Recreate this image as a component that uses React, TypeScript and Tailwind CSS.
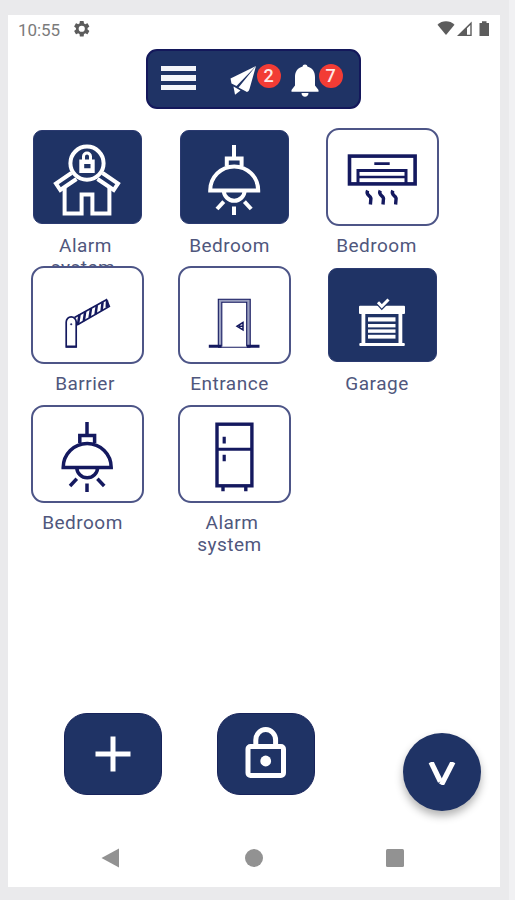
// src/App.tsx
import React from 'react';

const NAVY = '#14195f';

interface IconProps {
  color: string;
}

const TileSvg: React.FC<{ children: React.ReactNode }> = ({ children }) => (
  <svg width="113" height="97" viewBox="0 0 113 97" fill="none" className="shrink-0">
    {children}
  </svg>
);

const HouseIcon: React.FC<IconProps> = ({ color }) => (
  <TileSvg>
    <g stroke={color} strokeWidth="4">
      <circle cx="56" cy="35.2" r="16.6" />
      <path d="M40.5 45 L25 55.5 L29.3 62 L45.5 51" />
      <path d="M71.5 45 L87 55.5 L82.7 62 L66.5 51" />
      <path d="M33.6 59.5 V85.6 H50.6 V66.4 H61.4 V85.6 H78.4 V59.5" />
      <path d="M52.5 33 V28.5 a3.5 3.5 0 0 1 7 0 V33" strokeWidth="3" />
    </g>
    <path fillRule="evenodd" fill={color} d="M48.3 31.5 H63.7 V45 H48.3 Z M53.2 36 V40.3 H59.5 V36 Z" />
  </TileSvg>
);

const LampIcon: React.FC<IconProps & { thin?: boolean }> = ({ color, thin }) => (
  <TileSvg>
    <g stroke={color} strokeWidth={thin ? 3.5 : 4}>
      <path d="M56 17 V30" />
      <path d="M48.8 38 V30.5 H63.6 V38" />
      <path d="M32.2 62.4 a24 24 0 0 1 48 0 Z" />
      <path d="M45.8 62.4 a10.4 10.4 0 0 0 20.8 0" />
      <path d="M56 78.5 V87" />
      <path d="M45.8 73.7 L39 81" />
      <path d="M66.4 73.7 L73.2 81" />
    </g>
  </TileSvg>
);

const AirConditionerIcon: React.FC<IconProps> = ({ color }) => (
  <TileSvg>
    <g stroke={color} strokeWidth="3.4">
      <rect x="23.5" y="28.1" width="65.6" height="27.8" strokeWidth="3.6" />
      <path d="M48.3 35.7 H63.7" strokeWidth="2.8" />
      <path d="M32 56 V42.6 H80 V56" strokeWidth="3" />
      <path d="M32 49 H80" strokeWidth="2.6" />
      {[42.8, 55.4, 68].map((x) => (
        <path key={x} d={`M${x - 1.2} 62.5 c-2.6 5.5 4.6 5 3.2 9.2 l-0.4 4.8`} />
      ))}
    </g>
  </TileSvg>
);

const BarrierIcon: React.FC<IconProps> = ({ color }) => (
  <TileSvg>
    <g stroke={color} strokeWidth="1.7">
      <path d="M35.2 80 V55 a5 5.2 0 0 1 10 0 V80 Z" />
      <path d="M35 79.5 H45.5" strokeWidth="2.2" />
      <circle cx="40.2" cy="57.3" r="0.8" fill={color} strokeWidth="0.4" />
      <path d="M43.5 50.5 L75.5 32.8 L78.3 39.4 L46 58" />
      <path d="M48.5 47.8 L47 57.3 M54.2 44.6 L52.8 54 M60 41.4 L58.6 50.6 M65.8 38.2 L64.6 47.2 M71.6 35 L70.6 43.8 M76 33.5 L75.8 40.5" strokeWidth="2.5" />
    </g>
  </TileSvg>
);

const DoorIcon: React.FC<IconProps> = ({ color }) => (
  <TileSvg>
    <path d="M40 79.5 V32 H72.5 V79.5 H68.7 V35.3 H43.8 V79.5 Z" fill="#9ba0c0" />
    <g stroke={color} strokeWidth="1.1">
      <path d="M40.3 79.5 V32.3 H72.2 V79.5" />
      <path d="M43.8 79.5 V35.3 H68.7 V79.5" />
      <path d="M40 80.2 H72.5" />
      <path d="M30.8 79.2 H43.5 M69 79.2 H81.5" strokeWidth="3" />
      <path d="M65 55.5 L59 59.2 L65 63 Z M61 59.2 H65" strokeWidth="1.5" />
    </g>
  </TileSvg>
);

const GarageIcon: React.FC<IconProps> = ({ color }) => (
  <TileSvg>
    <g fill={color}>
      <rect x="33" y="38.7" width="46" height="8.3" rx="1" />
      <rect x="35.5" y="46" width="3.8" height="31" />
      <rect x="72.5" y="46" width="3.8" height="31" />
      <rect x="33.3" y="76" width="45.5" height="3" rx="1" />
      <rect x="42" y="50.3" width="27.5" height="4.2" />
      <rect x="42" y="57" width="27.5" height="3.4" />
      <rect x="42" y="62.4" width="27.5" height="3.4" />
      <rect x="42" y="67.8" width="27.5" height="3.8" />
    </g>
    <path d="M52 35.2 L55.8 39.3 L62.5 32.5" stroke="#1f3365" strokeWidth="5.5" />
    <path d="M52 35.2 L55.8 39.3 L62.5 32.5" stroke={color} strokeWidth="3" />
  </TileSvg>
);

const FridgeIcon: React.FC<IconProps> = ({ color }) => (
  <TileSvg>
    <g stroke={color} strokeWidth="3.4">
      <rect x="39" y="19.2" width="34.9" height="61.6" />
      <path d="M39 44.2 H74" strokeWidth="3" />
      <path d="M46.2 31.8 V38.5 M46.2 49.8 V56.3" strokeWidth="3.2" />
      <path d="M45 82 V86.3 M67.8 82 V86.3" />
    </g>
  </TileSvg>
);

interface Device {
  label: string;
  active: boolean;
  icon: React.ReactNode;
  labelClass: string;
}

const devices: Device[] = [
  { label: 'Alarm system', active: true, icon: <HouseIcon color="#fff" />, labelClass: 'pr-[9px]' },
  { label: 'Bedroom', active: true, icon: <LampIcon color="#fff" />, labelClass: 'pr-[10px]' },
  { label: 'Bedroom', active: false, icon: <AirConditionerIcon color={NAVY} />, labelClass: 'pr-[12px]' },
  { label: 'Barrier', active: false, icon: <BarrierIcon color={NAVY} />, labelClass: 'pr-[5px]' },
  { label: 'Entrance', active: false, icon: <DoorIcon color={NAVY} />, labelClass: 'pr-[10px]' },
  { label: 'Garage', active: true, icon: <GarageIcon color="#fff" />, labelClass: 'pr-[11px]' },
  { label: 'Bedroom', active: false, icon: <LampIcon color={NAVY} thin />, labelClass: 'pr-[10px]' },
  { label: 'Alarm system', active: false, icon: <FridgeIcon color={NAVY} />, labelClass: 'pr-[10px]' },
];

const DeviceTile: React.FC<{ device: Device }> = ({ device }) => (
  <div className="h-[138.5px] w-[113px]">
    <button className="relative z-10 flex h-[98px] w-[113px] items-center justify-center bg-transparent">
      <span
        className={
          device.active
            ? 'flex h-[94px] w-[109px] items-center justify-center overflow-hidden rounded-[9px] border border-[#2b3a70] bg-[#1f3365]'
            : 'flex h-[98px] w-[113px] items-center justify-center overflow-hidden rounded-[13px] border-2 border-[#4d5587] bg-white'
        }
      >
        {device.icon}
      </span>
    </button>
    <p className={`mt-[9px] text-center text-[19px] leading-[22.5px] tracking-[0.5px] text-[#50577d] ${device.labelClass}`}>
      {device.label.split(' ').map((word, i, words) => (
        <span key={word} className={i < words.length - 1 ? 'block pl-[5px]' : 'block'}>{word}</span>
      ))}
    </p>
  </div>
);

const Badge: React.FC<{ count: number }> = ({ count }) => (
  <span className="flex h-[24px] w-[24px] items-center justify-center rounded-full bg-[#f23c35] text-[18px] font-medium leading-none text-[#ffe9e6]">
    {count}
  </span>
);

const StatusBar: React.FC = () => (
  <div className="flex h-[34px] items-start justify-between pl-[10px] pr-[9px] pt-[5px]">
    <div className="flex items-center">
      <span className="w-[56px] text-[17px] leading-[20px] tracking-[-0.1px] text-[#7b7b7b]">10:55</span>
      <svg width="15.5" height="15.5" viewBox="2 2 20 20" fill="#5c5c5c" className="-mt-[2px]">
        <path
          fillRule="evenodd"
          d="M19.43 12.98c.04-.32.07-.64.07-.98s-.03-.66-.07-.98l2.11-1.65c.19-.15.24-.42.12-.64l-2-3.46c-.12-.22-.39-.3-.61-.22l-2.49 1c-.52-.4-1.08-.73-1.69-.98l-.38-2.65A.49.49 0 0 0 14 2h-4c-.25 0-.46.18-.49.42l-.38 2.65c-.61.25-1.17.59-1.69.98l-2.49-1c-.23-.09-.49 0-.61.22l-2 3.46c-.13.22-.07.49.12.64l2.11 1.65c-.04.32-.07.65-.07.98s.03.66.07.98l-2.11 1.65c-.19.15-.24.42-.12.64l2 3.46c.12.22.39.3.61.22l2.49-1c.52.4 1.08.73 1.69.98l.38 2.65c.03.24.24.42.49.42h4c.25 0 .46-.18.49-.42l.38-2.65c.61-.25 1.17-.59 1.69-.98l2.49 1c.23.09.49 0 .61-.22l2-3.46c.12-.22.07-.49-.12-.64zM12 16a4 4 0 1 1 0-8 4 4 0 0 1 0 8z"
        />
      </svg>
    </div>
    <svg width="54" height="17" viewBox="0 0 54 17" fill="#5c5c5c">
      <path d="M0.5 4.8 C5 0.2 13 0.2 17.5 4.8 L9 15 Z" />
      <path fillRule="evenodd" d="M34.7 1.5 V16 H20 Z M33.3 5 L30 8.3 V14.7 H33.3 Z" />
      <path d="M42.5 3 H45 V1.3 H49.5 V3 H52 V16 H42.5 Z" />
    </svg>
  </div>
);

const TopMenu: React.FC = () => (
  <header className="ml-[138px] flex h-[60px] w-[215px] items-start rounded-[11px] border-2 border-[#14185b] bg-[#1f3365] pl-[13px] pt-[13px]">
    <button className="mt-[2px] flex w-[35px] flex-col gap-[4px]">
      <span className="h-[5.3px] w-full bg-[#f4f5fa]" />
      <span className="h-[5.3px] w-full bg-[#f4f5fa]" />
      <span className="h-[5.3px] w-full bg-[#f4f5fa]" />
    </button>
    <svg width="28" height="32" viewBox="0 0 28 32" fill="#fff" className="ml-[33px] mt-[1px]">
      <path d="M27 1 L1.5 13.5 L2.5 18.5 L7.5 21 Z" />
      <path d="M27 1 L9.5 22.5 L18 27 Q20 26.5 20.5 24 Z" />
      <path d="M4.5 21.5 L6 29.8 L11.5 25.5 Z" />
    </svg>
    <div className="-ml-[0.5px]">
      <Badge count={2} />
    </div>
    <svg width="28" height="33" viewBox="0 0 28 33" fill="#fff" className="ml-[10px]">
      <path d="M14 0.5 C15.5 0.5 16.3 1.4 16.4 2.6 C21.5 4 24 8 24 13 V21.5 L27.5 26 V27.8 H0.5 V26 L4 21.5 V13 C4 8 6.5 4 11.6 2.6 C11.7 1.4 12.5 0.5 14 0.5 Z" />
      <path d="M10.5 28.9 H17.5 C17.5 34 10.5 34 10.5 28.9 Z" />
    </svg>
    <div>
      <Badge count={7} />
    </div>
  </header>
);

const BottomActions: React.FC = () => (
  <div className="flex h-[107px] items-start pl-[55.5px]">
    <button className="flex h-[82px] w-[98px] items-center justify-center rounded-[23px] border border-[#17235a] bg-[#1f3365]">
      <svg width="36" height="36" viewBox="0 0 36 36" stroke="#fff" strokeWidth="5">
        <path d="M18 0.5 V35.5 M0.5 18 H35.5" />
      </svg>
    </button>
    <button className="ml-[55px] flex h-[82px] w-[98px] items-center justify-center rounded-[23px] border border-[#17235a] bg-[#1f3365] pb-[3px]">
      <svg width="41" height="53" viewBox="0 0 41 53" fill="none" stroke="#fff" strokeWidth="5">
        <rect x="3" y="20.5" width="35.5" height="29" rx="2.5" />
        <path d="M10.8 20 V14 a9.9 10.4 0 0 1 19.8 0 V20" />
        <circle cx="20.7" cy="35" r="5.4" fill="#fff" stroke="none" />
      </svg>
    </button>
    <button className="ml-[88px] mt-[19.5px] flex h-[78px] w-[78px] shrink-0 items-center justify-center rounded-full bg-[#1f3365] pt-[3px] shadow-[0_5px_9px_rgba(0,0,0,0.3)]">
      <svg width="28" height="23" viewBox="0 0 28 23" fill="none" stroke="#fff" strokeWidth="5.2">
        <path d="M3 0 L12.4 19.5" />
        <path d="M25 0 L13.4 22.8" />
      </svg>
    </button>
  </div>
);

const NavBar: React.FC = () => (
  <nav className="flex h-[67px] items-center pl-[93px] pt-[8px]">
    <svg width="18" height="20" viewBox="0 0 18 20" fill="#929292">
      <path d="M18 0.5 V19.5 L0.5 10 Z" />
    </svg>
    <span className="ml-[125.5px] h-[18px] w-[18px] rounded-full bg-[#929292]" />
    <span className="ml-[123px] h-[18px] w-[18px] rounded-[1.5px] bg-[#929292]" />
  </nav>
);

const App: React.FC = () => {
  return (
    <div className="h-[900px] w-[515px] overflow-hidden border-r-[6px] border-[#f1f1f3] bg-[#eaeaec] pl-[8px] pt-[15px] font-[Roboto,sans-serif]">
      <div className="flex h-[872px] w-[492px] flex-col bg-white">
        <StatusBar />
        <TopMenu />
        <main className="mt-[18.5px] grid grid-cols-[113px_114px_113px] gap-x-[34px] pl-[23px]">
          {devices.map((device, i) => (
            <DeviceTile key={i} device={device} />
          ))}
        </main>
        <div className="mt-auto">
          <BottomActions />
          <NavBar />
        </div>
      </div>
    </div>
  );
};

export default App;
